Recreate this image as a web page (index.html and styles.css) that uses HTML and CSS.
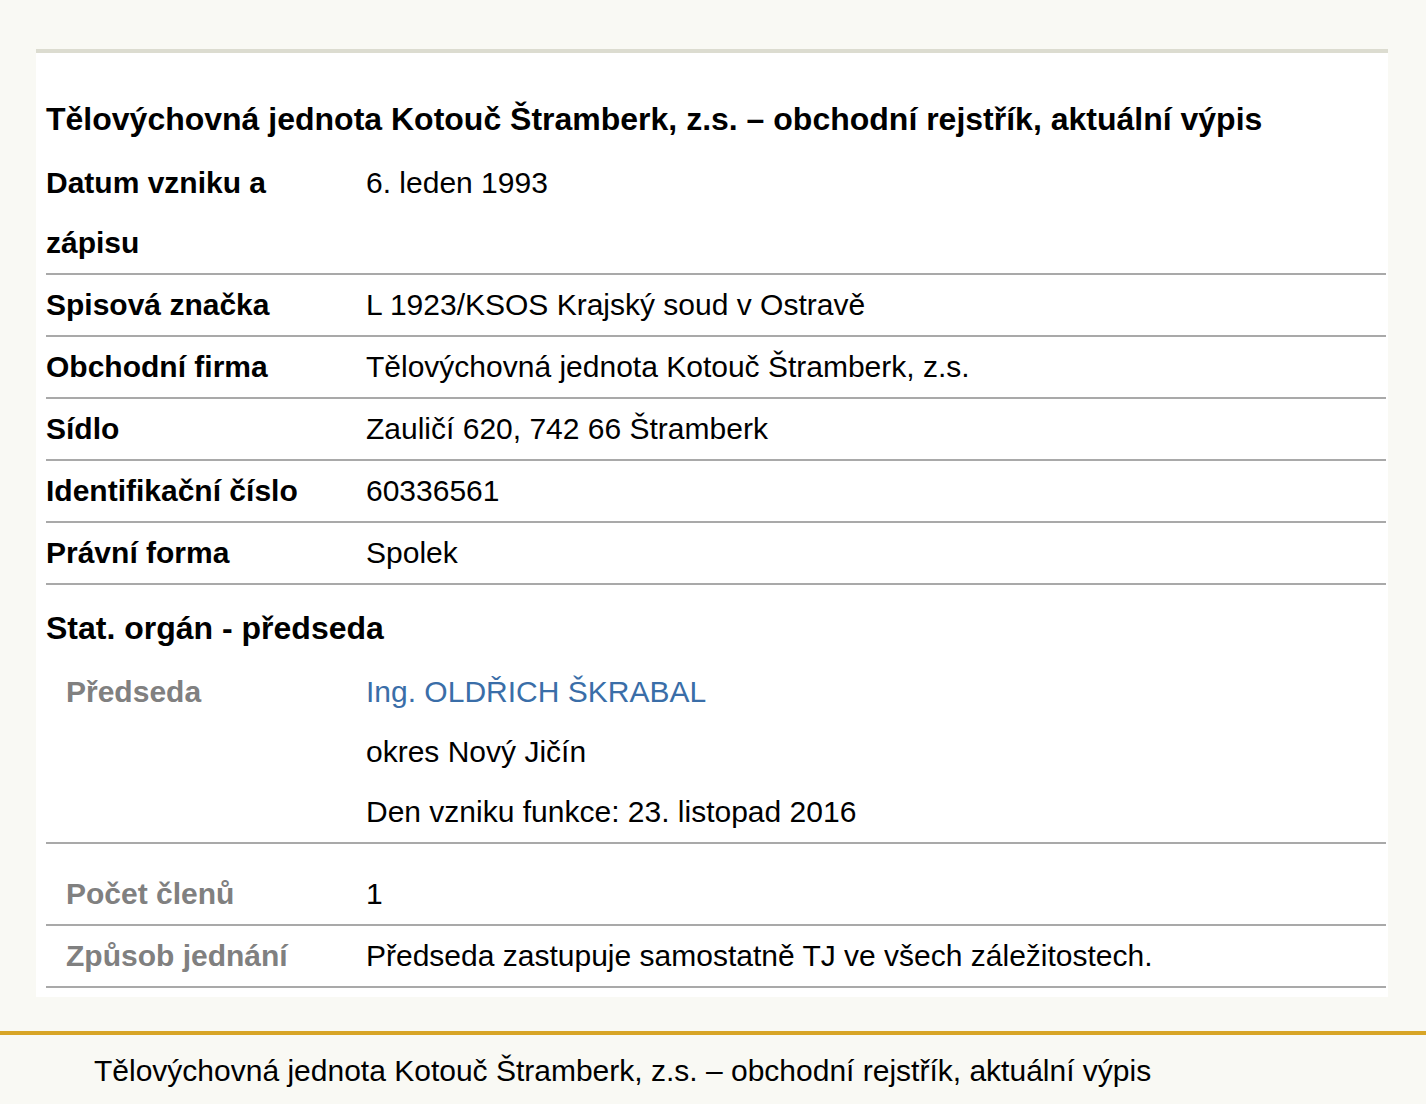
FILE: index.html
```html
<!DOCTYPE html>
<html lang="cs">
<head>
<meta charset="utf-8">
<title>Tělovýchovná jednota Kotouč Štramberk, z.s. – obchodní rejstřík, aktuální výpis</title>
<link rel="stylesheet" href="styles.css">
</head>
<body>
<main class="card">
  <h1 class="title">Tělovýchovná jednota Kotouč Štramberk, z.s. – obchodní rejstřík, aktuální výpis</h1>
  <div class="rows">
    <div class="row"><div class="label">Datum vzniku a zápisu</div><div class="value">6. leden 1993</div></div>
    <div class="row"><div class="label">Spisová značka</div><div class="value">L 1923/KSOS Krajský soud v Ostravě</div></div>
    <div class="row"><div class="label">Obchodní firma</div><div class="value">Tělovýchovná jednota Kotouč Štramberk, z.s.</div></div>
    <div class="row"><div class="label">Sídlo</div><div class="value">Zauličí 620, 742 66 Štramberk</div></div>
    <div class="row"><div class="label">Identifikační číslo</div><div class="value">60336561</div></div>
    <div class="row"><div class="label">Právní forma</div><div class="value">Spolek</div></div>
  </div>
  <h2 class="section">Stat. orgán - předseda</h2>
  <div class="rows">
    <div class="row sub"><div class="label">Předseda</div><div class="value"><a class="link" href="#">Ing. OLDŘICH ŠKRABAL</a><br>okres Nový Jičín<br>Den vzniku funkce: 23. listopad 2016</div></div>
    <div class="row sub padded"><div class="label">Počet členů</div><div class="value">1</div></div>
    <div class="row sub"><div class="label">Způsob jednání</div><div class="value">Předseda zastupuje samostatně TJ ve všech záležitostech.</div></div>
  </div>
</main>
<footer class="footer">
  <p class="footer-text">Tělovýchovná jednota Kotouč Štramberk, z.s. – obchodní rejstřík, aktuální výpis</p>
</footer>
</body>
</html>
```

FILE: styles.css
```css
html, body {
  margin: 0;
  padding: 0;
  background: #f9f9f4;
  color: #000;
  font-family: "Liberation Sans", Arial, sans-serif;
}

.card {
  margin: 49px 0 0 36px;
  width: 1352px;
  box-sizing: border-box;
  background: #fff;
  border-top: 4px solid #dcdcd0;
  padding: 0 2px 9px 10px;
}

.title {
  margin: 34px 0 2px 0;
  font-size: 32px;
  line-height: 64px;
  font-weight: bold;
}

.rows {
  display: flex;
  flex-direction: column;
}

.row {
  display: grid;
  grid-template-columns: 320px 1fr;
  border-bottom: 2px solid #a9a9a9;
  font-size: 30px;
  line-height: 60px;
}

.label {
  font-weight: bold;
}

.sub .label {
  color: #808080;
  padding-left: 20px;
}

.padded {
  padding-top: 20px;
}

.link {
  color: #3a6ea8;
  text-decoration: none;
}

.section {
  margin: 11px 0 2px 0;
  font-size: 32px;
  line-height: 64px;
  font-weight: bold;
}

.footer {
  margin-top: 34px;
  border-top: 4px solid #d8a526;
}

.footer-text {
  margin: 0;
  padding: 6px 0 0 94px;
  font-size: 30px;
  line-height: 60px;
}
```
